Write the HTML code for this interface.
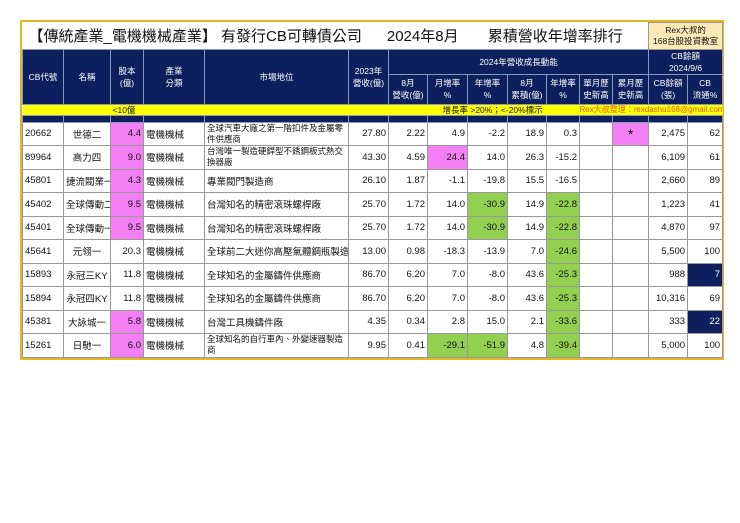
<!DOCTYPE html><html><head><meta charset="utf-8"><style>
body{margin:0;background:#fff;width:740px;height:523px;position:relative;font-family:"Liberation Sans","Noto Sans CJK TC",sans-serif;}
.wrap{position:absolute;left:20px;top:20px;width:700px;border:2px solid #e8b624;}
table{border-collapse:collapse;table-layout:fixed;width:700px;}
td{border:1px solid #999;padding:0 2px;font-size:9.5px;white-space:nowrap;overflow:hidden;color:#111;}
.h td{background:#0d1f5c;color:#fff;text-align:center;border-color:#8899bb;font-size:8.5px;line-height:12px;}
.t td{border:none;}
.r td{height:22.5px;text-align:right;}
.c{text-align:center!important}.l{text-align:left!important}
.pk{background:#f47ef4}.gr{background:#92d050}.nv{background:#0d1f5c;color:#fff!important}
.ml{white-space:normal;line-height:11px;font-size:8.5px}
</style></head><body><div class="wrap"><table>
<colgroup><col style="width:41px"><col style="width:47px"><col style="width:33px"><col style="width:61px"><col style="width:144px"><col style="width:40px"><col style="width:39px"><col style="width:40px"><col style="width:40px"><col style="width:39px"><col style="width:33px"><col style="width:33px"><col style="width:36px"><col style="width:39px"><col style="width:35px"></colgroup>
<tr class="t"><td colspan="13" style="height:26px;font-size:15px;padding-left:6px">【傳統產業_電機機械產業】 有發行CB可轉債公司 &nbsp;&nbsp;&nbsp;&nbsp; 2024年8月 &nbsp;&nbsp;&nbsp;&nbsp;&nbsp; 累積營收年增率排行</td><td colspan="2" style="background:#fbe9b8;text-align:center;font-size:8.5px;line-height:11px;border:1px solid #999">Rex大叔的<br>168台股投資教室</td></tr>
<tr class="h"><td rowspan="2">CB代號</td><td rowspan="2">名稱</td><td rowspan="2">股本<br>(億)</td><td rowspan="2">產業<br>分類</td><td rowspan="2">市場地位</td><td rowspan="2">2023年<br>營收(億)</td><td colspan="7" style="height:20px">2024年營收成長動能</td><td colspan="2">CB餘額<br>2024/9/6</td></tr>
<tr class="h" style="height:30px"><td>8月<br>營收(億)</td><td>月增率<br>%</td><td>年增率<br>%</td><td>8月<br>累積(億)</td><td>年增率<br>%</td><td>單月歷<br>史新高</td><td>累月歷<br>史新高</td><td>CB餘額<br>(張)</td><td>CB<br>流通%</td></tr>
<tr style="background:#ffff00;height:10px"><td colspan="2" style="border:none"></td><td colspan="2" style="border:none;font-size:8.5px;line-height:10px">&lt;10億</td><td colspan="3" style="border:none"></td><td colspan="4" style="border:none;font-size:8.5px;line-height:10px;padding-left:15px">增長率 &gt;20%；&lt;-20%標示</td><td colspan="4" style="border:none;color:#e06000;font-size:8px;line-height:10px;padding:0">Rex大叔整理：rexdashu168@gmail.com</td></tr>
<tr class="h" style="height:7px"><td></td><td></td><td></td><td></td><td></td><td></td><td></td><td></td><td></td><td></td><td></td><td></td><td></td><td></td><td></td></tr>
<tr class="r"><td class="l">20662</td><td class="c">世德二</td><td class="pk">4.4</td><td class="l">電機機械</td><td class="l ml">全球汽車大廠之第一階扣件及金屬零件供應商</td><td>27.80</td><td>2.22</td><td>4.9</td><td>-2.2</td><td>18.9</td><td>0.3</td><td></td><td class="pk c" style="font-size:14px">*</td><td>2,475</td><td>62</td></tr>
<tr class="r"><td class="l">89964</td><td class="c">高力四</td><td class="pk">9.0</td><td class="l">電機機械</td><td class="l ml">台灣唯一製造硬銲型不銹鋼板式熱交換器廠</td><td>43.30</td><td>4.59</td><td class="pk">24.4</td><td>14.0</td><td>26.3</td><td>-15.2</td><td></td><td></td><td>6,109</td><td>61</td></tr>
<tr class="r"><td class="l">45801</td><td class="c">捷流閥業一</td><td class="pk">4.3</td><td class="l">電機機械</td><td class="l">專業閥門製造商</td><td>26.10</td><td>1.87</td><td>-1.1</td><td>-19.8</td><td>15.5</td><td>-16.5</td><td></td><td></td><td>2,660</td><td>89</td></tr>
<tr class="r"><td class="l">45402</td><td class="c">全球傳動二</td><td class="pk">9.5</td><td class="l">電機機械</td><td class="l">台灣知名的精密滾珠螺桿廠</td><td>25.70</td><td>1.72</td><td>14.0</td><td class="gr">-30.9</td><td>14.9</td><td class="gr">-22.8</td><td></td><td></td><td>1,223</td><td>41</td></tr>
<tr class="r"><td class="l">45401</td><td class="c">全球傳動一</td><td class="pk">9.5</td><td class="l">電機機械</td><td class="l">台灣知名的精密滾珠螺桿廠</td><td>25.70</td><td>1.72</td><td>14.0</td><td class="gr">-30.9</td><td>14.9</td><td class="gr">-22.8</td><td></td><td></td><td>4,870</td><td>97</td></tr>
<tr class="r"><td class="l">45641</td><td class="c">元翎一</td><td>20.3</td><td class="l">電機機械</td><td class="l">全球前二大迷你高壓氣體鋼瓶製造廠</td><td>13.00</td><td>0.98</td><td>-18.3</td><td>-13.9</td><td>7.0</td><td class="gr">-24.6</td><td></td><td></td><td>5,500</td><td>100</td></tr>
<tr class="r"><td class="l">15893</td><td class="c">永冠三KY</td><td>11.8</td><td class="l">電機機械</td><td class="l">全球知名的金屬鑄件供應商</td><td>86.70</td><td>6.20</td><td>7.0</td><td>-8.0</td><td>43.6</td><td class="gr">-25.3</td><td></td><td></td><td>988</td><td class="nv">7</td></tr>
<tr class="r"><td class="l">15894</td><td class="c">永冠四KY</td><td>11.8</td><td class="l">電機機械</td><td class="l">全球知名的金屬鑄件供應商</td><td>86.70</td><td>6.20</td><td>7.0</td><td>-8.0</td><td>43.6</td><td class="gr">-25.3</td><td></td><td></td><td>10,316</td><td>69</td></tr>
<tr class="r"><td class="l">45381</td><td class="c">大詠城一</td><td class="pk">5.8</td><td class="l">電機機械</td><td class="l">台灣工具機鑄件廠</td><td>4.35</td><td>0.34</td><td>2.8</td><td>15.0</td><td>2.1</td><td class="gr">-33.6</td><td></td><td></td><td>333</td><td class="nv">22</td></tr>
<tr class="r"><td class="l">15261</td><td class="c">日馳一</td><td class="pk">6.0</td><td class="l">電機機械</td><td class="l ml">全球知名的自行車內、外變速器製造商</td><td>9.95</td><td>0.41</td><td class="gr">-29.1</td><td class="gr">-51.9</td><td>4.8</td><td class="gr">-39.4</td><td></td><td></td><td>5,000</td><td>100</td></tr>
</table></div></body></html>
